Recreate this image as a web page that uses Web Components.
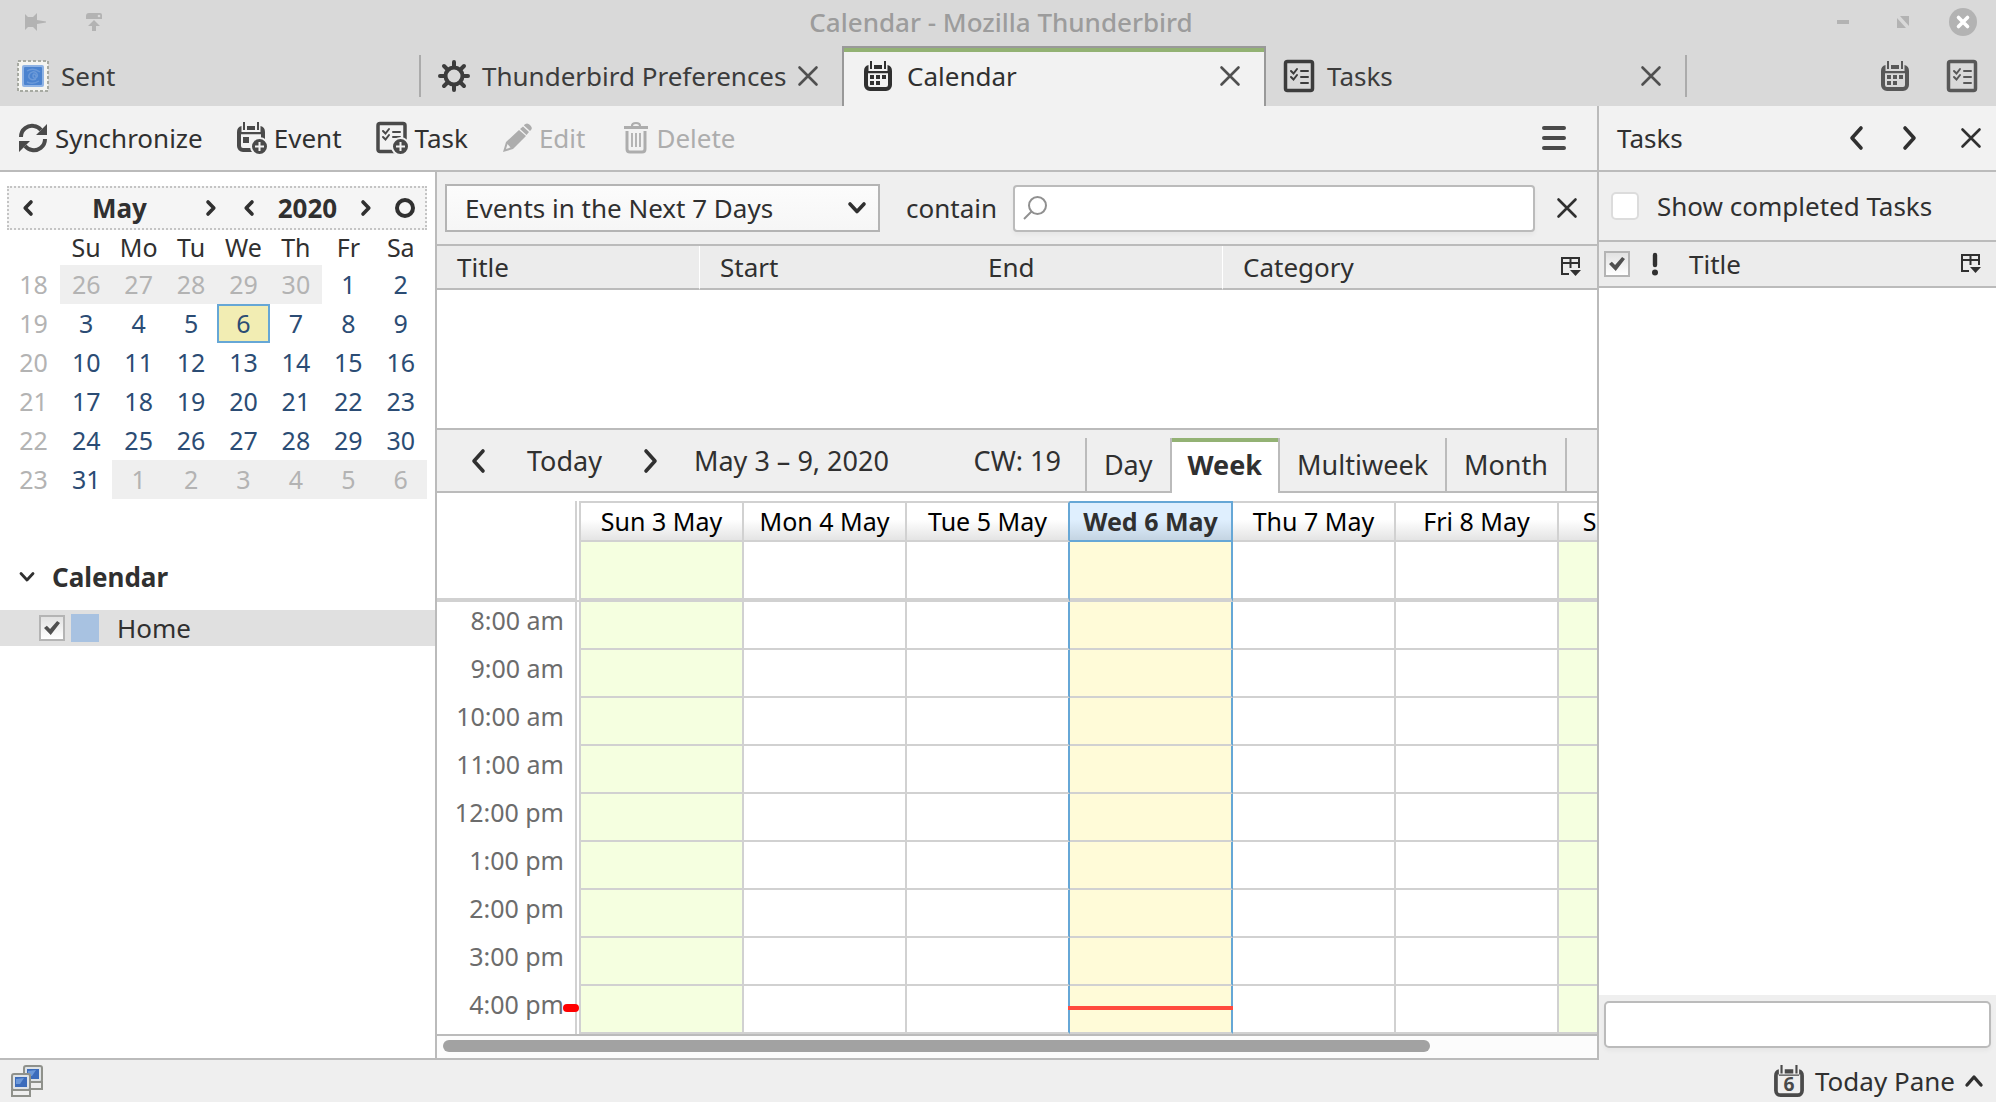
<!DOCTYPE html>
<html lang="en">
<head>
<meta charset="utf-8">
<title>Calendar - Mozilla Thunderbird</title>
<style>
  html, body { margin: 0; height: 100%; }
  body {
    font: 26px/32px "Noto Sans", "Open Sans", sans-serif;
    color: #303030;
    --line: #bbbbbb;
    --grid: #d1d1d1;
    --chrome: #efefef;
    --accent: #93b274;
    --today: #66a7d6;
    --ink: #303030;
    overflow: hidden;
  }
</style>
</head>
<body>
<tb-window></tb-window>
<script>
const RESET = `
  *, *::before { box-sizing: border-box; }
  button, input, select { font: inherit; color: inherit; margin: 0; padding: 0; border: 0; background: none; }
  button { display: inline-flex; align-items: center; }
  table { border-collapse: separate; border-spacing: 0; }
  th, td { padding: 0; font-weight: 400; }
  tb-icon { flex: none; }
`;

const define = (name, markup, setup) => {
  const template = document.createElement('template');
  template.innerHTML = `<style>${RESET}</style>${markup}`;
  customElements.define(name, class extends HTMLElement {
    constructor() {
      super();
      this.attachShadow({ mode: 'open' }).append(template.content.cloneNode(true));
    }
    connectedCallback() { if (setup) setup(this, this.shadowRoot); }
  });
};

const PINS = `<path fill="currentColor" d="M6 0h2v8H6zM20 0h2v8h-2zM10 4h8v4h-8z"/>`;
const FRAME = `M4.500 4Q0 5 0 10V24a6 6 0 0 0 6 6h16a6 6 0 0 0 6-6V10Q28 5 23.500 4V10H4.500z`;
const PLUS = `<path stroke="#f2f2f2" stroke-width="2" d="M18 24.500h9M22.500 20v9"/>`;
const ICONS = {
  x: ['0 0 20 20', '<path fill="none" stroke="currentColor" stroke-width="2.600" stroke-linecap="round" d="M1.500 1.500l17 17M18.500 1.500l-17 17"/>'],
  left: ['0 0 14 24', '<path fill="none" stroke="currentColor" stroke-width="3.600" stroke-linecap="round" stroke-linejoin="round" d="M12 2L3 12l9 10"/>'],
  right: ['0 0 14 24', '<path fill="none" stroke="currentColor" stroke-width="3.600" stroke-linecap="round" stroke-linejoin="round" d="M2 2l9 10-9 10"/>'],
  sleft: ['0 0 10 16', '<path fill="none" stroke="currentColor" stroke-width="3.600" stroke-linecap="round" stroke-linejoin="round" d="M8 2L2.200 8 8 14"/>'],
  sright: ['0 0 10 16', '<path fill="none" stroke="currentColor" stroke-width="3.600" stroke-linecap="round" stroke-linejoin="round" d="M2 2l5.800 6L2 14"/>'],
  down: ['0 0 18 12', '<path fill="none" stroke="currentColor" stroke-width="3.600" stroke-linecap="round" stroke-linejoin="round" d="M2 2l7 7.500L16 2"/>'],
  sdown: ['0 0 16 12', '<path fill="none" stroke="currentColor" stroke-width="2.800" stroke-linecap="round" stroke-linejoin="round" d="M2 2.500l6 6.500 6-6.500"/>'],
  up: ['0 0 18 12', '<path fill="none" stroke="currentColor" stroke-width="3.400" stroke-linecap="round" stroke-linejoin="round" d="M2 10l7-8 7 8"/>'],
  ring: ['0 0 20 20', '<circle cx="10" cy="10" r="8" fill="none" stroke="currentColor" stroke-width="4"/>'],
  pin: ['0 0 22 18', '<path fill="currentColor" d="M0 1l3 3h5l4-4v7l9 1.500v1L12 11v7l-4-4H3l-3 3z"/>'],
  shade: ['0 0 18 18', '<path fill="currentColor" d="M4 0h11a2 2 0 0 1 2 2v4H1V3a3 3 0 0 1 3-3zM9 7l6 6h-4v5H7v-5H3z"/><circle cx="14" cy="3" r="1.300" fill="#d9d9d9"/>'],
  min: ['0 0 12 4', '<path fill="currentColor" d="M0 0h12v4H0z"/>'],
  max: ['0 0 12 12', '<path fill="currentColor" d="M0 2v10h9zM3 0h9v10z"/>'],
  close: ['0 0 28 28', '<circle cx="14" cy="14" r="14" fill="#b3b3b3"/><path fill="none" stroke="#fff" stroke-width="3.600" stroke-linecap="round" d="M9.500 9.500l9 9M18.500 9.500l-9 9"/>'],
  calendar: ['0 0 28 30', `<path fill="currentColor" fill-rule="evenodd" d="${FRAME}M4 12.200H24V24a2 2 0 0 1-2 2H6a2 2 0 0 1-2-2z"/>${PINS}<path fill="currentColor" d="M6 14h4v4H6zM12 14h4v4h-4zM18 14h4v4h-4zM6 20h4v4H6zM12 20h4v4h-4z"/>`],
  tasks: ['0 0 32 32', '<rect x="2.500" y="1.500" width="27" height="29" rx="2" fill="none" stroke="currentColor" stroke-width="3.500"/><path fill="none" stroke="currentColor" stroke-width="2" stroke-linecap="round" d="M8 11l2.500 2.500L14 9M8 17l2.500 2.500L14 15M18 11h7M18 17h7M18 23h7"/>'],
  date: ['0 0 28 30', `<path fill="currentColor" fill-rule="evenodd" d="${FRAME}M3.500 9H24.500V24.500a2 2 0 0 1-2 2H5.500a2 2 0 0 1-2-2z"/>${PINS}<text x="14" y="24" text-anchor="middle" font-size="18" font-weight="700" fill="currentColor">6</text>`, 32, 32],
  gear: ['0 0 32 32', '<circle cx="16" cy="16" r="8.500" fill="none" stroke="currentColor" stroke-width="4"/><path stroke="currentColor" stroke-width="4" stroke-linecap="round" d="M16 2v4M16 26v4M2 16h4M26 16h4M6 6l3 3M23 23l3 3M6 26l3-3M23 9l3-3"/>'],
  stamp: ['0 0 32 32', '<rect x="1" y="1" width="30" height="30" fill="#f4f4f0" stroke="#a7aaa2" stroke-width="2" stroke-dasharray="3 2"/><rect x="5" y="5" width="22" height="22" rx="2" fill="#8fb3e4"/><rect x="7" y="7" width="18" height="18" rx="1" fill="#4b83cf"/><path fill="none" stroke="#6c9ad8" stroke-width="1.500" d="M19 19c-5 2-8-1-7-4s6-5 8-1-4 6-4 2 4-1 3 2M10 11q6-4 13 1M10 22q6 3 12-1"/>'],
  sync: ['0 0 30 30', '<path fill="none" stroke="currentColor" stroke-width="4" d="M3 14C3 6 10 2 16 3q4 .5 7 4M27 16c0 8-7 12-13 11q-4-.5-7-4"/><path fill="currentColor" d="M29 1v11H18zM1 29V18h11z"/>'],
  event: ['0 0 30 32', `<path fill="currentColor" fill-rule="evenodd" d="${FRAME}M4 12.200H24V24a2 2 0 0 1-2 2H6a2 2 0 0 1-2-2z"/>${PINS}<path fill="currentColor" d="M6 15h6v6H6z"/><circle cx="22.500" cy="24.500" r="8.500" fill="currentColor" stroke="#f2f2f2" stroke-width="2"/>${PLUS}`],
  task: ['0 0 32 32', `<rect x="2" y="1.500" width="27" height="28" rx="2" fill="none" stroke="currentColor" stroke-width="3.500"/><path fill="none" stroke="currentColor" stroke-width="2" stroke-linecap="round" d="M7 9l2.500 2.500L13 7M7 15l2.500 2.500L13 13M17 10h7M17 15h7"/><g transform="translate(2)"><circle cx="22.500" cy="24.500" r="8.500" fill="currentColor" stroke="#f2f2f2" stroke-width="2"/>${PLUS}</g>`],
  edit: ['0 0 30 30', '<path fill="currentColor" d="M21 3.500L27 9 24.500 12 18 6zM22 2q3-3 6 0t1 5l-1 1-6-5.500z"/><path fill="currentColor" fill-rule="evenodd" d="M17 7l7 6L11 26 1 29 4 19zM5.500 21L4 26l4.500-1.500z"/>'],
  trash: ['0 0 26 32', '<path fill="none" stroke="currentColor" stroke-width="2.200" d="M9 4q0-3 4-3t4 3"/><path fill="currentColor" d="M1 4h24v3H1z"/><path fill="none" stroke="currentColor" stroke-width="3" d="M4 9v18q0 3 3 3h12q3 0 3-3V9"/><path stroke="currentColor" stroke-width="1.800" d="M9 11v14M13 11v14M17 11v14"/>'],
  menu: ['0 0 24 24', '<path stroke="currentColor" stroke-width="4" stroke-linecap="round" d="M2 2h20M2 12h20M2 22h20"/>'],
  search: ['0 0 24 24', '<circle cx="14.500" cy="9.500" r="8.500" fill="none" stroke="#909090" stroke-width="2"/><path stroke="#909090" stroke-width="2" d="M1 23l7.500-7.500"/>'],
  picker: ['0 0 20 20', '<path fill="none" stroke="currentColor" stroke-width="2" d="M8 17H1V1h17v10M1 6h17M9.500 1v10"/><path fill="currentColor" d="M9 13h11l-5.500 6z"/>'],
  bang: ['0 0 6 24', '<path stroke="currentColor" stroke-width="4.400" stroke-linecap="round" d="M3 3v10"/><circle cx="3" cy="20.500" r="3" fill="currentColor"/>'],
  network: ['0 0 32 32', '<rect x="14" y="17" width="17" height="7" fill="#eee" stroke="#8f918b" stroke-width="2"/><rect x="13" y="1" width="18" height="16" rx="2" fill="#dfe3e6" stroke="#8f918b" stroke-width="2"/><rect x="16" y="4" width="12" height="10" fill="#3c6cbb"/><path fill="#6c98d8" d="M17 6l8-1-4 6h-4z"/><rect x="1" y="25" width="18" height="6" fill="#eee" stroke="#8f918b" stroke-width="2"/><rect x="1" y="9" width="18" height="16" rx="2" fill="#dfe3e6" stroke="#8f918b" stroke-width="2"/><rect x="4" y="12" width="12" height="10" fill="#3c6cbb"/><path fill="#6c98d8" d="M5 14l8-1-4 6H5z"/>']
};

define('tb-icon', `<style>:host { display: inline-flex; } svg { display: block; overflow: visible; }</style><span></span>`, (el, root) => {
  const icon = ICONS[el.getAttribute('name')];
  if (!icon) return;
  const [box, art, width, height] = icon;
  const [, , w, h] = box.split(' ');
  root.querySelector('span').innerHTML = `<svg width="${width || w}" height="${height || h}" viewBox="${box}" aria-hidden="true">${art}</svg>`;
});

define('tb-check', `
<style>
  :host { display: block; }
  label { display: flex; align-items: center; gap: 18px; }
  input { appearance: none; width: 26px; height: 26px; border: 2px solid #b4b4b4; background: linear-gradient(#e2e2e2, #fff); display: grid; place-items: center; }
  input:checked::before { content: ""; width: 16px; height: 14px; background: #505050; clip-path: polygon(0 50%, 18% 34%, 38% 58%, 82% 0, 100% 14%, 42% 100%); }
  :host([soft]) input { width: 28px; height: 28px; border: 2px solid #dcdcdc; border-radius: 5px; background: #fff; }
</style>
<label><input type="checkbox"><slot></slot></label>`, (el, root) => {
  const input = root.querySelector('input');
  input.checked = el.hasAttribute('checked');
  if (el.hasAttribute('label')) input.setAttribute('aria-label', el.getAttribute('label'));
});

define('tb-titlebar', `
<style>
  :host { display: grid; grid-template-columns: 1fr auto 1fr; align-items: center; height: 46px; padding: 0 19px 2px 25px; color: #b3b3b3; }
  .l { display: flex; gap: 38px; }
  .r { display: flex; justify-content: flex-end; align-items: center; gap: 48px; }
  .r button:last-child { margin-left: -8px; }
  h1 { margin: 0; font: inherit; font-weight: 500; color: #9c9c9c; }
</style>
<div class="l"><button aria-label="Pin"><tb-icon name="pin"></tb-icon></button><button aria-label="Shade"><tb-icon name="shade"></tb-icon></button></div>
<h1>Calendar - Mozilla Thunderbird</h1>
<div class="r"><button aria-label="Minimize"><tb-icon name="min"></tb-icon></button><button aria-label="Maximize"><tb-icon name="max"></tb-icon></button><button aria-label="Close"><tb-icon name="close"></tb-icon></button></div>`);

define('tb-tab', `
<style>
  :host { display: flex; align-items: center; width: 421px; height: 60px; padding: 0 24px 0 17px; color: #3c3c3c; }
  .open { flex: 1; gap: 12px; min-width: 0; white-space: nowrap; }
  .x { color: #505050; }
  :host([first]) .x { display: none; }
  :host([first])::after, :host([last])::after { content: ""; width: 2px; height: 42px; background: #ababab; margin-right: -24px; }
  :host([last])::after { margin-left: 24px; }
  :host([active]) { border: 2px solid #999; border-bottom: 0; background: linear-gradient(var(--accent) 4px, #f2f2f2 4px); color: var(--ink); width: 424px; padding-left: 20px; }
  :host([active]) .open { gap: 15px; }
  :host([active]) button { padding-bottom: 2px; }
</style>
<button class="open"><slot name="icon"></slot><slot></slot></button>
<button class="x" aria-label="Close tab"><tb-icon name="x"></tb-icon></button>`);

define('tb-tabstrip', `
<style>
  :host { display: flex; align-items: center; height: 60px; }
  .end { flex: 1; display: flex; justify-content: flex-end; gap: 37px; padding-right: 18px; color: #585858; }
</style>
<slot></slot>
<div class="end"><button aria-label="Switch to the calendar tab"><tb-icon name="calendar"></tb-icon></button><button aria-label="Switch to the tasks tab"><tb-icon name="tasks"></tb-icon></button></div>`);

define('tb-toolbar', `
<style>
  :host { display: flex; align-items: center; height: 66px; padding: 0 31px 0 18px; background: #f2f2f2; border-bottom: 2px solid var(--line); }
  button { gap: 7px; margin-right: 34px; }
  button tb-icon { color: #4a4a4a; }
  button:disabled { margin-right: 38px; }
  button:disabled, button:disabled tb-icon { color: #adadad; }
  .menu { margin: 0 0 0 auto; }
</style>
<button><tb-icon name="sync"></tb-icon>Synchronize</button>
<button><tb-icon name="event"></tb-icon>Event</button>
<button><tb-icon name="task"></tb-icon>Task</button>
<button disabled><tb-icon name="edit"></tb-icon>Edit</button>
<button disabled><tb-icon name="trash"></tb-icon>Delete</button>
<button class="menu" aria-label="Menu"><tb-icon name="menu"></tb-icon></button>`);

define('tb-minimonth', `
<style>
  :host { display: block; padding: 14px 8px 0 7px; font-size: 25px; }
  header { display: flex; align-items: center; height: 44px; padding: 0 10px 0 14px; border: 2px dotted #c4c4c4; background: #f5f5f5; font-size: 26px; font-weight: 700; }
  .m { flex: 1; text-align: center; }
  .y { width: 107px; text-align: center; }
  .gap { width: 28px; }
  .ring { margin-left: 24px; }
  table { width: 100%; table-layout: fixed; text-align: center; color: #2b4c74; }
  th, td { padding-bottom: 2px; }
  thead th { height: 35px; color: var(--ink); }
  td, tbody th { height: 39px; }
  tbody th { color: #b3b3b3; }
  .wk { width: 53px; }
  .off { background: #efefef; color: #b3b3b3; }
  .now { background: #f2edb3; box-shadow: inset 0 0 0 2px var(--today); }
</style>
<header><button aria-label="Previous month"><tb-icon name="sleft"></tb-icon></button><span class="m">May</span><button aria-label="Next month"><tb-icon name="sright"></tb-icon></button><span class="gap"></span><button aria-label="Previous year"><tb-icon name="sleft"></tb-icon></button><span class="y">2020</span><button aria-label="Next year"><tb-icon name="sright"></tb-icon></button><button class="ring" aria-label="Go to today"><tb-icon name="ring"></tb-icon></button></header>
<table><thead><tr><th class="wk"></th><th>Su</th><th>Mo</th><th>Tu</th><th>We</th><th>Th</th><th>Fr</th><th>Sa</th></tr></thead><tbody></tbody></table>`, (el, root) => {
  const first = new Date(2020, 3, 26);
  let rows = '';
  for (let w = 0; w < 6; w++) {
    rows += `<tr><th>${18 + w}</th>`;
    for (let d = 0; d < 7; d++) {
      const day = new Date(first.getFullYear(), first.getMonth(), first.getDate() + w * 7 + d);
      const kind = day.getMonth() !== 4 ? 'off' : day.getDate() === 6 ? 'now' : '';
      rows += `<td class="${kind}">${day.getDate()}</td>`;
    }
    rows += '</tr>';
  }
  root.querySelector('tbody').innerHTML = rows;
});

define('tb-calendar-list', `
<style>
  :host { display: block; padding-top: 60px; }
  .head { display: flex; height: 36px; margin-bottom: 15px; padding-left: 19px; gap: 17px; font-weight: 700; }
  .row { display: flex; align-items: center; height: 36px; padding-left: 39px; background: #e0e0e0; }
  .chip { width: 28px; height: 28px; margin: 0 18px 0 6px; background: #a8c2e1; }
</style>
<button class="head"><tb-icon name="sdown"></tb-icon>Calendar</button>
<div class="row"><tb-check checked label="Home"></tb-check><span class="chip"></span>Home</div>`);

define('tb-filter', `
<style>
  :host { display: flex; align-items: center; height: 74px; padding: 0 20px 0 8px; background: var(--chrome); border-bottom: 2px solid var(--line); }
  .pick { display: grid; align-items: center; width: 435px; height: 48px; margin-right: 26px; }
  .pick > * { grid-area: 1 / 1; }
  select { appearance: none; height: 48px; width: 100%; padding: 0 18px; border: 2px solid #b4b4b4; background: linear-gradient(#fcfcfc, #f6f6f6); }
  .pick tb-icon { justify-self: end; margin-right: 14px; pointer-events: none; }
  .find { flex: 1; display: flex; align-items: center; height: 47px; margin: 0 22px 0 16px; padding: 0 8px; background: #fff; border: 2px solid var(--line); border-radius: 4px; box-shadow: 0 3px 4px #0000000a; }
  input { flex: 1; min-width: 0; outline: 0; }
</style>
<div class="pick"><select aria-label="Range"><option>Events in the Next 7 Days</option></select><tb-icon name="down"></tb-icon></div>
<label for="q">contain</label>
<div class="find"><tb-icon name="search"></tb-icon><input id="q" type="text"></div>
<button aria-label="Close"><tb-icon name="x"></tb-icon></button>`);

define('tb-events', `
<style>
  :host { display: block; height: 184px; background: #fff; border-bottom: 2px solid var(--line); }
  table { width: 100%; table-layout: fixed; }
  th { height: 44px; padding-left: 20px; text-align: left; background: #ececec; border-bottom: 2px solid var(--line); }
  .s { border-right: 1px solid #fff; }
  .p { padding: 0 16px 0 0; }
  .p button { display: flex; margin-left: auto; }
</style>
<table><colgroup><col style="width:263px"><col style="width:268px"><col style="width:255px"><col><col style="width:60px"></colgroup>
<thead><tr><th class="s">Title</th><th>Start</th><th class="s">End</th><th>Category</th><th class="p"><button aria-label="Choose columns"><tb-icon name="picker"></tb-icon></button></th></tr></thead></table>`);

define('tb-viewnav', `
<style>
  :host { display: flex; height: 63px; padding: 0 30px 0 34px; background: linear-gradient(var(--line), var(--line)) bottom / 100% 2px no-repeat var(--chrome); font-size: 27px; }
  .n { display: flex; align-items: center; flex: 1; padding-bottom: 2px; }
  .today { margin: 0 42px; }
  .range { margin-left: 36px; }
  .cw { margin: 0 24px 0 auto; }
  [role=tablist] { display: flex; padding-top: 8px; }
  [role=tab] { padding: 0 17px; border-left: 2px solid var(--line); margin-bottom: 2px; }
  [role=tab]:last-child { border-right: 2px solid var(--line); }
  [aria-selected=true] { margin-bottom: 0; padding: 0 16px 2px; background: linear-gradient(var(--accent) 4px, #fff 4px); font-weight: 700; }
</style>
<div class="n"><button aria-label="Previous week"><tb-icon name="left"></tb-icon></button><button class="today">Today</button><button aria-label="Next week"><tb-icon name="right"></tb-icon></button><span class="range">May 3 – 9, 2020</span><span class="cw">CW: 19</span></div>
<div role="tablist"><button role="tab">Day</button><button role="tab" aria-selected="true">Week</button><button role="tab">Multiweek</button><button role="tab">Month</button></div>`);

define('tb-week', `
<style>
  :host { display: flex; flex-direction: column; flex: 1; min-height: 0; background: #fff; padding-top: 8px; font-size: 25px; }
  .view { flex: 1; min-height: 0; overflow: hidden; border-bottom: 2px solid var(--line); }
  table { table-layout: fixed; width: 1285px; }
  .t { width: 144px; border-right: 6px double var(--grid); }
  td, thead th { border-right: 2px solid var(--grid); }
  thead th:not(.t) { height: 41px; padding-bottom: 2px; border-top: 2px solid var(--grid); border-bottom: 2px solid var(--grid); background: linear-gradient(#fff 45%, #e4e4e4); color: #000; white-space: nowrap; }
  .all > * { height: 60px; border-bottom: 4px solid var(--grid); }
  .h > * { height: 48px; }
  .h td { border-bottom: 2px solid var(--grid); }
  .h .t { padding: 0 11px 12px 0; text-align: right; color: #6c6c6c; white-space: nowrap; }
  .sun, .sat { background: #f5ffe0; }
  .wed { background: #fffbd8; }
  .tue, .wed, thead th.tue, thead th.wed { border-right-color: var(--today); }
  thead th.wed { background: linear-gradient(#dfeffe 45%, #c4d4e2); border-color: var(--today); color: var(--ink); font-weight: 700; }
  .h .t, .h .wed { position: relative; }
  .now .t::after { content: ""; position: absolute; right: -4px; top: 18px; width: 16px; height: 8px; border-radius: 4px; background: #f00; }
  .now .wed::after { content: ""; position: absolute; left: -2px; right: -2px; top: 20px; height: 4px; background: #ff4a3e; }
  .bar { height: 22px; padding: 4px 6px; background: #fcfcfc; }
  .thumb { width: 86%; height: 12px; border-radius: 6px; background: #a2a2a2; }
</style>
<div class="view"><table><thead></thead><tbody></tbody></table></div>
<div class="bar"><div class="thumb"></div></div>`, (el, root) => {
  const days = ['sun', 'mon', 'tue', 'wed', 'thu', 'fri', 'sat'];
  const label = (d, i) => `${d[0].toUpperCase()}${d.slice(1)} ${i + 3} May`;
  const cells = days.map(d => `<td class="${d}"></td>`).join('');
  root.querySelector('thead').innerHTML = `<tr><th class="t"></th>${days.map((d, i) => `<th class="${d}">${label(d, i)}</th>`).join('')}</tr>`;
  let rows = `<tr class="all"><th class="t"></th>${cells}</tr>`;
  for (let h = 8; h <= 16; h++) {
    rows += `<tr class="h${h === 16 ? ' now' : ''}"><th class="t">${h > 12 ? h - 12 : h}:00 ${h < 12 ? 'am' : 'pm'}</th>${cells}</tr>`;
  }
  root.querySelector('tbody').innerHTML = rows;
});

define('tb-taskpane', `
<style>
  :host { display: flex; flex-direction: column; background: #fff; }
  header { display: flex; align-items: center; height: 66px; padding: 0 15px 0 18px; background: #f2f2f2; border-bottom: 2px solid var(--line); }
  h2 { margin: 0 auto 0 0; font: inherit; }
  .n { margin-left: 40px; }
  .c { margin-left: 44px; }
  .show { display: flex; align-items: center; height: 70px; padding: 0 12px; background: var(--chrome); border-bottom: 2px solid var(--line); }
  table { width: 100%; table-layout: fixed; }
  th { height: 46px; text-align: left; background: #ececec; border-bottom: 2px solid var(--line); }
  th button, th > tb-icon { display: flex; }
  .done { padding-left: 5px; }
  .add { margin-top: auto; padding: 6px 5px 12px; background: var(--chrome); }
  .add input { display: block; width: 100%; height: 47px; padding: 0 8px; background: #fff; border: 2px solid var(--line); border-radius: 5px; box-shadow: 0 3px 4px #0000000a; }
</style>
<header><h2>Tasks</h2><button aria-label="Previous"><tb-icon name="left"></tb-icon></button><button class="n" aria-label="Next"><tb-icon name="right"></tb-icon></button><button class="c" aria-label="Close"><tb-icon name="x"></tb-icon></button></header>
<div class="show"><tb-check soft>Show completed Tasks</tb-check></div>
<table><colgroup><col style="width:53px"><col style="width:37px"><col><col style="width:35px"></colgroup><thead><tr><th class="done"><tb-check checked label="Completed"></tb-check></th><th><tb-icon name="bang"></tb-icon></th><th>Title</th><th><button aria-label="Choose columns"><tb-icon name="picker"></tb-icon></button></th></tr></thead></table>
<div class="add"><input type="text" aria-label="New task"></div>`);

define('tb-status', `
<style>
  :host { display: flex; align-items: center; justify-content: space-between; height: 42px; padding: 0 13px 0 11px; background: var(--chrome); }
  .p { gap: 10px; }
  .p tb-icon:first-child { color: #4a4a4a; }
</style>
<tb-icon name="network"></tb-icon>
<button class="p"><tb-icon name="date"></tb-icon>Today Pane<tb-icon name="up"></tb-icon></button>`);

define('tb-window', `
<style>
  :host { display: flex; flex-direction: column; height: 100vh; background: #d9d9d9; }
  .work { flex: 1; min-height: 0; display: flex; }
  .main { flex: 1; min-width: 0; display: flex; flex-direction: column; border-right: 2px solid var(--line); }
  .split { flex: 1; min-height: 0; display: flex; border-bottom: 2px solid var(--line); }
  .side { width: 437px; flex: none; background: #fff; border-right: 2px solid var(--line); }
  .cal { flex: 1; min-width: 0; display: flex; flex-direction: column; }
  tb-taskpane { width: 397px; flex: none; }
</style>
<tb-titlebar></tb-titlebar>
<tb-tabstrip>
  <tb-tab first><tb-icon slot="icon" name="stamp"></tb-icon>Sent</tb-tab>
  <tb-tab><tb-icon slot="icon" name="gear"></tb-icon>Thunderbird Preferences</tb-tab>
  <tb-tab active><tb-icon slot="icon" name="calendar"></tb-icon>Calendar</tb-tab>
  <tb-tab last><tb-icon slot="icon" name="tasks"></tb-icon>Tasks</tb-tab>
</tb-tabstrip>
<div class="work">
  <div class="main">
    <tb-toolbar></tb-toolbar>
    <div class="split">
      <div class="side"><tb-minimonth></tb-minimonth><tb-calendar-list></tb-calendar-list></div>
      <div class="cal"><tb-filter></tb-filter><tb-events></tb-events><tb-viewnav></tb-viewnav><tb-week></tb-week></div>
    </div>
  </div>
  <tb-taskpane></tb-taskpane>
</div>
<tb-status></tb-status>`);
</script>
</body>
</html>
